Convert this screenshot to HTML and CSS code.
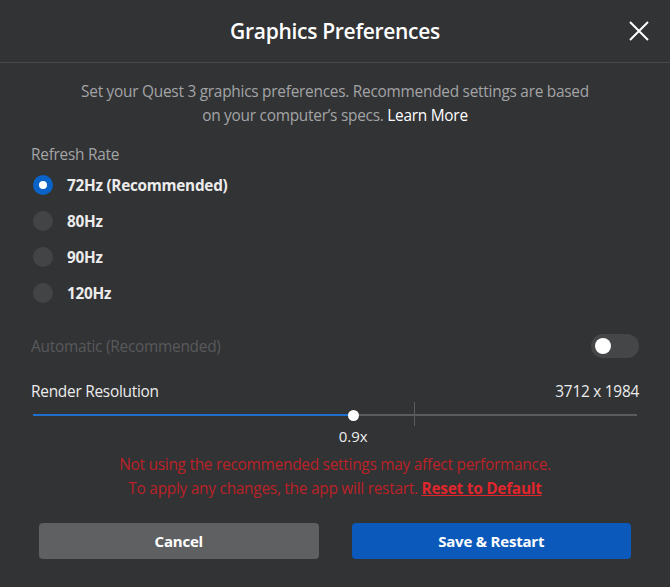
FILE: index.html
```html
<!DOCTYPE html>
<html lang="en">
<head>
    <meta charset="utf-8">
    <title>Graphics Preferences</title>
    <link rel="stylesheet" href="styles.css">
</head>
<body>
    <div class="dialog">
        <div class="header">
            <h1>Graphics Preferences</h1>
            <button class="close" type="button" aria-label="Close">
                <svg width="20" height="20" viewBox="0 0 20 20"><path d="M1 1 L19 19 M19 1 L1 19" stroke="#fff" stroke-width="2" fill="none"/></svg>
            </button>
        </div>

        <div class="content">
            <div class="intro">
                <div>Set your Quest 3 graphics preferences. Recommended settings are based</div>
                <div><span>on your computer’s specs.</span> <a href="#">Learn More</a></div>
            </div>

            <div class="section-label">Refresh Rate</div>
            <div class="radios">
                <label class="radio checked"><span class="dot"></span>72Hz (Recommended)</label>
                <label class="radio"><span class="dot"></span>80Hz</label>
                <label class="radio"><span class="dot"></span>90Hz</label>
                <label class="radio"><span class="dot"></span>120Hz</label>
            </div>

            <div class="auto-row">
                <span>Automatic (Recommended)</span>
                <span class="toggle"><span class="knob"></span></span>
            </div>

            <div class="res-row">
                <span>Render Resolution</span>
                <span>3712 x 1984</span>
            </div>
            <div class="slider">
                <div class="track"></div>
                <div class="fill" style="width: 53%"></div>
                <div class="tick" style="left: 63.1%"></div>
                <div class="thumb" style="left: 53%"></div>
                <div class="value" style="left: 53%">0.9x</div>
            </div>

            <div class="warning">
                <div>Not using the recommended settings may affect performance.</div>
                <div><span>To apply any changes, the app will restart.</span> <a href="#">Reset to Default</a></div>
            </div>

            <div class="buttons">
                <button type="button" class="btn cancel">Cancel</button>
                <button type="button" class="btn save">Save &amp; Restart</button>
            </div>
        </div>
    </div>
</body>
</html>
```

FILE: styles.css
```css
body {
    margin: 0;
    padding: 0;
    background-color: #323335;
    font-family: 'Open Sans', 'Noto Sans', sans-serif;
    color: #fff;
}
.dialog {
    width: 670px;
    height: 587px;
    background-color: #323335;
}
.header {
    position: relative;
    height: 62px;
    border-bottom: 1px solid #48494b;
    display: flex;
    align-items: center;
    justify-content: center;
}
h1 {
    margin: 0;
    font-size: 21px;
    font-weight: 600;
    letter-spacing: -0.3px;
}
.close {
    position: absolute;
    right: 21px;
    top: 21px;
    padding: 0;
    background: none;
    border: none;
    cursor: pointer;
    line-height: 0;
}
.content {
    padding: 0 31px;
}
.intro {
    margin-top: 17px;
    text-align: center;
    font-size: 15.4px;
    line-height: 24px;
    color: #a3a4a6;
    letter-spacing: -0.25px;
}
.intro a {
    color: #fff;
    text-decoration: none;
}
.section-label {
    margin-top: 16px;
    font-size: 15.4px;
    line-height: 22px;
    color: #a3a4a6;
    letter-spacing: -0.25px;
}
.radios {
    margin-top: 9px;
    display: flex;
    flex-direction: column;
    gap: 16px;
}
.radio {
    display: flex;
    align-items: center;
    gap: 14px;
    height: 20px;
    padding-left: 2px;
    font-size: 15.3px;
    font-weight: 700;
    color: #ececec;
    letter-spacing: -0.25px;
}
.dot {
    width: 20px;
    height: 20px;
    border-radius: 50%;
    background-color: #434446;
    box-sizing: border-box;
}
.radio.checked .dot {
    background-color: #fff;
    border: 6px solid #0a63c9;
}
.auto-row, .res-row {
    display: flex;
    justify-content: space-between;
    align-items: center;
    font-size: 15.4px;
    letter-spacing: -0.25px;
}
.auto-row {
    margin-top: 31px;
    height: 24px;
    color: #58595b;
}
.toggle {
    width: 48px;
    height: 24px;
    border-radius: 12px;
    background-color: #454648;
    display: flex;
    align-items: center;
    padding: 0 4px;
    box-sizing: border-box;
}
.knob {
    width: 16px;
    height: 16px;
    border-radius: 50%;
    background-color: #fff;
}
.res-row {
    margin-top: 22px;
    height: 22px;
    color: #ececec;
}
.slider {
    position: relative;
    margin: 0 2px;
    height: 51px;
}
.track, .fill {
    position: absolute;
    left: 0;
    top: 12px;
    height: 2px;
}
.track {
    width: 100%;
    background-color: #5b5c5e;
}
.fill {
    background-color: #1f6fd1;
}
.tick {
    position: absolute;
    top: 0;
    width: 1px;
    height: 24px;
    background-color: #5b5c5e;
}
.thumb {
    position: absolute;
    top: 8px;
    width: 11px;
    height: 11px;
    margin-left: -5px;
    border-radius: 50%;
    background-color: #fff;
}
.value {
    position: absolute;
    top: 24px;
    transform: translateX(-50%);
    font-size: 15px;
    color: #ececec;
}
.warning {
    text-align: center;
    font-size: 15.4px;
    line-height: 24px;
    color: #bb2227;
    letter-spacing: -0.25px;
}
.warning a {
    color: #df262c;
    font-weight: 700;
}
.buttons {
    margin-top: 22px;
    padding: 0 8px;
    display: flex;
    gap: 33px;
}
.btn {
    flex: 1;
    height: 36px;
    border: none;
    border-radius: 4px;
    color: #fff;
    font-family: 'Open Sans', 'Noto Sans', sans-serif;
    font-size: 15px;
    font-weight: 700;
    letter-spacing: -0.2px;
    cursor: pointer;
}
.cancel {
    background-color: #5f6062;
}
.save {
    background-color: #0a59bb;
}
```
